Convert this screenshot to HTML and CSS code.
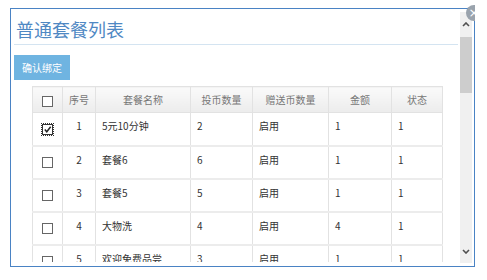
FILE: index.html
```html
<!DOCTYPE html>
<html lang="zh-CN">
<head>
    <meta charset="UTF-8">
    <title>普通套餐列表</title>
    <link rel="stylesheet" href="styles.css">
</head>
<body>
    <div class="dialog">
        <div class="content">
            <h2 class="title">普通套餐列表</h2>
            <button class="btn-bind">确认绑定</button>

            <table class="pkg-table">
                <thead>
                    <tr>
                        <th class="col-check"><span class="box"></span></th>
                        <th class="col-no">序号</th>
                        <th class="col-name">套餐名称</th>
                        <th class="col-coin">投币数量</th>
                        <th class="col-gift">赠送币数量</th>
                        <th class="col-money">金额</th>
                        <th class="col-state">状态</th>
                    </tr>
                </thead>
                <tbody>
                    <tr>
                        <td class="col-check"><span class="box checked"><svg viewBox="0 0 10 10"><polyline points="2,5 4.2,7.5 8.5,2" /></svg></span></td>
                        <td class="col-no">1</td>
                        <td>5元10分钟</td>
                        <td>2</td>
                        <td>启用</td>
                        <td>1</td>
                        <td>1</td>
                    </tr>
                    <tr>
                        <td class="col-check"><span class="box"></span></td>
                        <td class="col-no">2</td>
                        <td>套餐6</td>
                        <td>6</td>
                        <td>启用</td>
                        <td>1</td>
                        <td>1</td>
                    </tr>
                    <tr>
                        <td class="col-check"><span class="box"></span></td>
                        <td class="col-no">3</td>
                        <td>套餐5</td>
                        <td>5</td>
                        <td>启用</td>
                        <td>1</td>
                        <td>1</td>
                    </tr>
                    <tr>
                        <td class="col-check"><span class="box"></span></td>
                        <td class="col-no">4</td>
                        <td>大物洗</td>
                        <td>4</td>
                        <td>启用</td>
                        <td>4</td>
                        <td>1</td>
                    </tr>
                    <tr>
                        <td class="col-check"><span class="box"></span></td>
                        <td class="col-no">5</td>
                        <td>欢迎免费品尝</td>
                        <td>3</td>
                        <td>启用</td>
                        <td>1</td>
                        <td>1</td>
                    </tr>
                </tbody>
            </table>
        </div>

        <div class="scrollbar">
            <div class="sb-arrow">
                <svg viewBox="0 0 8 5"><polyline points="1,4 4,1 7,4" /></svg>
            </div>
            <div class="sb-thumb"></div>
            <div class="sb-track"></div>
            <div class="sb-arrow">
                <svg viewBox="0 0 8 5"><polyline points="1,1 4,4 7,1" /></svg>
            </div>
        </div>

        <!-- close button, only half of it shows -->
        <div class="close-wrap"><span class="close">×</span></div>
    </div>
</body>
</html>
```

FILE: styles.css
```css
/* Generel styling */
html, body {
    margin: 0;
    padding: 0;
    background: #fff;
    font-family: "Noto Sans CJK SC", "Open Sans", sans-serif;
    color: #333;
}

* {
    box-sizing: border-box;
}

.dialog {
    position: relative;
    display: flex;
    align-items: flex-start;
    width: 465px;
    height: 259px;
    margin: 8px 0 0 10px;
    border: 1px solid #4a83c4;
    background: #fff;
}

.content {
    flex: 1;
    height: 253px;
    overflow: hidden;
    padding-left: 3px;
}

.title {
    margin: 0 2px 0 0;
    padding: 8px 0 3px 2px;
    font-size: 18px;
    line-height: 24px;
    font-weight: normal;
    color: #4f88c3;
    border-bottom: 1px solid #d4e4f1;
}

.btn-bind {
    display: block;
    width: 56px;
    height: 25px;
    margin-top: 10px;
    padding: 0;
    border: none;
    background-color: #6fb4e1;
    color: #fff;
    font-family: inherit;
    font-size: 10px;
}

/* Tabel */
.pkg-table {
    margin: 6px 0 0 18px;
    border-collapse: collapse;
    table-layout: fixed;
    width: 410px;
    font-size: 10px;
}

.pkg-table th,
.pkg-table td {
    border: 1px solid #e2e2e2;
    padding: 0 6px;
    text-align: left;
    white-space: nowrap;
}

.pkg-table th {
    height: 26px;
    font-weight: normal;
    color: #777;
    text-align: center;
    background: linear-gradient(#fafafa, #ececec);
}

.pkg-table td {
    height: 33px;
    vertical-align: top;
    padding-top: 5px;
    border-bottom: 2px solid #ececec;
}

.pkg-table .col-check { width: 30px; text-align: center; padding: 0; }
.pkg-table .col-no { width: 33px; text-align: center; }
.pkg-table .col-name { width: 95px; }
.pkg-table .col-coin { width: 62px; }
.pkg-table .col-gift { width: 76px; }
.pkg-table .col-money { width: 63px; }
.pkg-table .col-state { width: 51px; }

.pkg-table td.col-check {
    padding-top: 7px;
}

.box {
    display: inline-block;
    width: 11px;
    height: 11px;
    border: 1px solid #666;
    background: #fff;
    vertical-align: middle;
}

.box.checked {
    outline: 1px dotted #333;
    border-color: #333;
}

.box svg {
    display: block;
    width: 9px;
    height: 9px;
    fill: none;
    stroke: #222;
    stroke-width: 1.6;
}

/* Scrollbar */
.scrollbar {
    display: flex;
    flex-direction: column;
    width: 12px;
    height: 251px;
    margin: 3px 2px 0 0;
    background: #f0f0f0;
}

.sb-arrow {
    height: 24px;
    display: flex;
    align-items: center;
    justify-content: center;
}

.sb-arrow svg {
    width: 8px;
    height: 5px;
    fill: none;
    stroke: #505050;
    stroke-width: 1.6;
}

.sb-thumb {
    height: 56px;
    margin: 1px 0;
    background: #cdcdcd;
}

.sb-track {
    flex: 1;
}

.close-wrap {
    position: absolute;
    top: -4px;
    right: -1px;
    width: 9px;
    height: 16px;
    overflow: hidden;
}

.close {
    display: block;
    width: 16px;
    height: 16px;
    border-radius: 50%;
    background: #9aa3ad;
    color: #fff;
    font-size: 13px;
    line-height: 15px;
    text-align: center;
    font-family: "DejaVu Sans", sans-serif;
}
```
